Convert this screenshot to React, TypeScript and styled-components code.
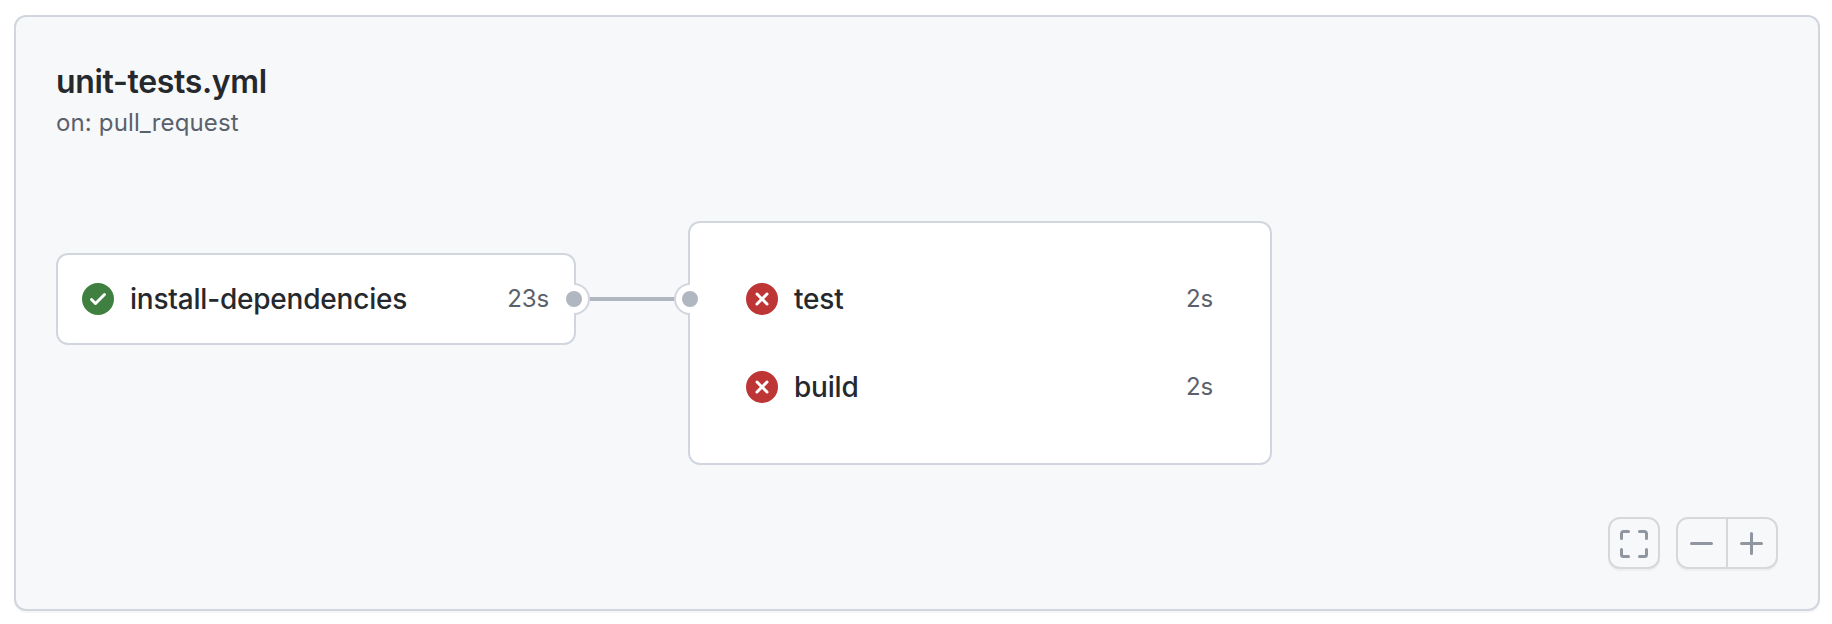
import React from "react";
import styled, { createGlobalStyle } from "styled-components";

const color = {
  canvas: "#f7f8fa",
  card: "#ffffff",
  border: "#d1d6de",
  text: "#25292e",
  muted: "#5a616b",
  connector: "#b0b7c0",
  control: "#8f96a0",
  success: "#3f8040",
  danger: "#be3536",
};

const GlobalStyle = createGlobalStyle`
  *, *::before, *::after { box-sizing: border-box; }
  body {
    margin: 0;
    background: #fff;
    color: ${color.text};
    font-family: Inter, "Liberation Sans", sans-serif;
    -webkit-font-smoothing: antialiased;
  }
`;

const Page = styled.main`
  height: 624px;
  padding: 15px 12px 13px 14px;
`;

const Panel = styled.section`
  display: flex;
  flex-direction: column;
  height: 596px;
  padding: 44px 40px 40px;
  background: ${color.canvas};
  border: 2px solid ${color.border};
  border-radius: 12px;
  box-shadow: 0 2px 0 rgba(27, 31, 36, 0.04);
`;

const Title = styled.h1`
  margin: 0;
  font-size: 32px;
  line-height: 42px;
  font-weight: 600;
  letter-spacing: -0.33px;
`;

const Trigger = styled.p`
  margin: 0;
  color: ${color.muted};
  font-size: 24px;
  line-height: 40px;
  letter-spacing: 0.14px;
`;

const Graph = styled.div`
  display: flex;
  align-items: flex-start;
  margin-top: 78px;
`;

const Card = styled.div<{ $width: number; $matrix?: boolean }>`
  position: relative;
  flex: none;
  width: ${(p) => p.$width}px;
  margin-top: ${(p) => (p.$matrix ? 0 : 32)}px;
  padding: ${(p) => (p.$matrix ? "32px 56px 32px" : "0 24px")};
  background: ${color.card};
  border: 2px solid ${color.border};
  border-radius: 12px;
`;

const Job = styled.div`
  display: flex;
  align-items: center;
  height: 88px;
`;

const JobName = styled.span`
  flex: 1;
  margin-left: 16px;
  font-size: 28px;
  line-height: 40px;
  font-weight: 500;
  letter-spacing: -0.21px;
`;

const Duration = styled.span`
  margin-right: 1px;
  color: ${color.muted};
  font-size: 24px;
  line-height: 36px;
  letter-spacing: -0.1px;
`;

const Connector = styled.div`
  flex: none;
  width: 112px;
  height: 4px;
  margin-top: 76px;
  background: ${color.connector};
`;

const PortMark = styled.svg<{ $side: "left" | "right" }>`
  position: absolute;
  top: ${(p) => (p.$side === "right" ? 28 : 60)}px;
  ${(p) => p.$side}: -16px;
  transform: ${(p) => (p.$side === "left" ? "scaleX(-1)" : "none")};
`;

const Controls = styled.div`
  display: flex;
  gap: 16px;
  align-self: flex-end;
  margin-top: auto;
`;

const ButtonGroup = styled.div`
  display: flex;
  border: 2px solid rgba(31, 35, 40, 0.15);
  border-radius: 12px;
  box-shadow: 0 2px 0 rgba(31, 35, 40, 0.04);
`;

const ControlButton = styled.button`
  display: grid;
  place-items: center;
  width: 48px;
  height: 48px;
  padding: 2px 0 0;
  border: 0;
  background: transparent;
  color: ${color.control};

  & + & {
    width: 50px;
    border-left: 2px solid rgba(31, 35, 40, 0.15);
  }
`;

const Svg = styled.svg`
  display: block;
  flex: none;
  fill: currentColor;
`;

const StatusSvg = styled(Svg)<{ $ok: boolean }>`
  color: ${(p) => (p.$ok ? color.success : color.danger)};
  fill-rule: evenodd;
`;

const paths = {
  success:
    "M8 16A8 8 0 1 0 8 0a8 8 0 0 0 0 16Zm3.78-9.72a.751.751 0 0 0-.018-1.042.751.751 0 0 0-1.042-.018L6.75 9.19 5.28 7.72a.751.751 0 0 0-1.042.018.751.751 0 0 0-.018 1.042l2 2a.75.75 0 0 0 1.06 0Z",
  failure:
    "M2.343 13.657A8 8 0 1 1 13.658 2.343 8 8 0 0 1 2.343 13.657ZM6.03 4.97a.751.751 0 0 0-1.042.018.751.751 0 0 0-.018 1.042L6.94 8 4.97 9.97a.749.749 0 0 0 .326 1.275.749.749 0 0 0 .734-.215L8 9.06l1.97 1.97a.749.749 0 0 0 1.275-.326.749.749 0 0 0-.215-.734L9.06 8l1.97-1.97a.749.749 0 0 0-.326-1.275.749.749 0 0 0-.734.215L8 6.94Z",
  fullscreen:
    "M1.75 10a.75.75 0 0 1 .75.75v2.5c0 .138.112.25.25.25h2.5a.75.75 0 0 1 0 1.5h-2.5A1.75 1.75 0 0 1 1 13.25v-2.5a.75.75 0 0 1 .75-.75Zm12.5 0a.75.75 0 0 1 .75.75v2.5A1.75 1.75 0 0 1 13.25 15h-2.5a.75.75 0 0 1 0-1.5h2.5a.25.25 0 0 0 .25-.25v-2.5a.75.75 0 0 1 .75-.75ZM2.75 2.5a.25.25 0 0 0-.25.25v2.5a.75.75 0 0 1-1.5 0v-2.5C1 1.784 1.784 1 2.75 1h2.5a.75.75 0 0 1 0 1.5ZM10 1.75a.75.75 0 0 1 .75-.75h2.5c.966 0 1.75.784 1.75 1.75v2.5a.75.75 0 0 1-1.5 0v-2.5a.25.25 0 0 0-.25-.25h-2.5a.75.75 0 0 1-.75-.75Z",
  minus: "M2 7.75A.75.75 0 0 1 2.75 7h10a.75.75 0 0 1 0 1.5h-10A.75.75 0 0 1 2 7.75Z",
  plus: "M7.75 2a.75.75 0 0 1 .75.75V7h4.25a.75.75 0 0 1 0 1.5H8.5v4.25a.75.75 0 0 1-1.5 0V8.5H2.75a.75.75 0 0 1 0-1.5H7V2.75A.75.75 0 0 1 7.75 2Z",
};

function Icon({ name }: { name: "fullscreen" | "minus" | "plus" }) {
  return (
    <Svg width="32" height="32" viewBox="0 0 16 16" aria-hidden="true">
      <path d={paths[name]} />
    </Svg>
  );
}

function JobRow({ name, time, ok = false }: { name: string; time: string; ok?: boolean }) {
  return (
    <Job>
      <StatusSvg $ok={ok} width="32" height="32" viewBox="0 0 16 16" aria-hidden="true">
        <path d={ok ? paths.success : paths.failure} />
      </StatusSvg>
      <JobName>{name}</JobName>
      <Duration>{time}</Duration>
    </Job>
  );
}

// The outline covers only the half of the port that sticks out of the card.
function Port({ side }: { side: "left" | "right" }) {
  return (
    <PortMark $side={side} width="32" height="32" viewBox="0 0 32 32" aria-hidden="true">
      <circle cx="16" cy="16" r="15" fill={color.card} />
      <path d="M16 1a15 15 0 0 1 0 30" fill="none" stroke={color.border} strokeWidth="2" />
      <circle cx="16" cy="16" r="8" fill={color.connector} />
    </PortMark>
  );
}

export default function App() {
  return (
    <>
      <GlobalStyle />
      <Page>
        <Panel>
          <Title>unit-tests.yml</Title>
          <Trigger>on: pull_request</Trigger>
          <Graph>
            <Card $width={520}>
              <JobRow name="install-dependencies" time="23s" ok />
              <Port side="right" />
            </Card>
            <Connector />
            <Card $width={584} $matrix>
              <JobRow name="test" time="2s" />
              <JobRow name="build" time="2s" />
              <Port side="left" />
            </Card>
          </Graph>
          <Controls>
            <ButtonGroup>
              <ControlButton aria-label="Full screen">
                <Icon name="fullscreen" />
              </ControlButton>
            </ButtonGroup>
            <ButtonGroup>
              <ControlButton aria-label="Zoom out">
                <Icon name="minus" />
              </ControlButton>
              <ControlButton aria-label="Zoom in">
                <Icon name="plus" />
              </ControlButton>
            </ButtonGroup>
          </Controls>
        </Panel>
      </Page>
    </>
  );
}
